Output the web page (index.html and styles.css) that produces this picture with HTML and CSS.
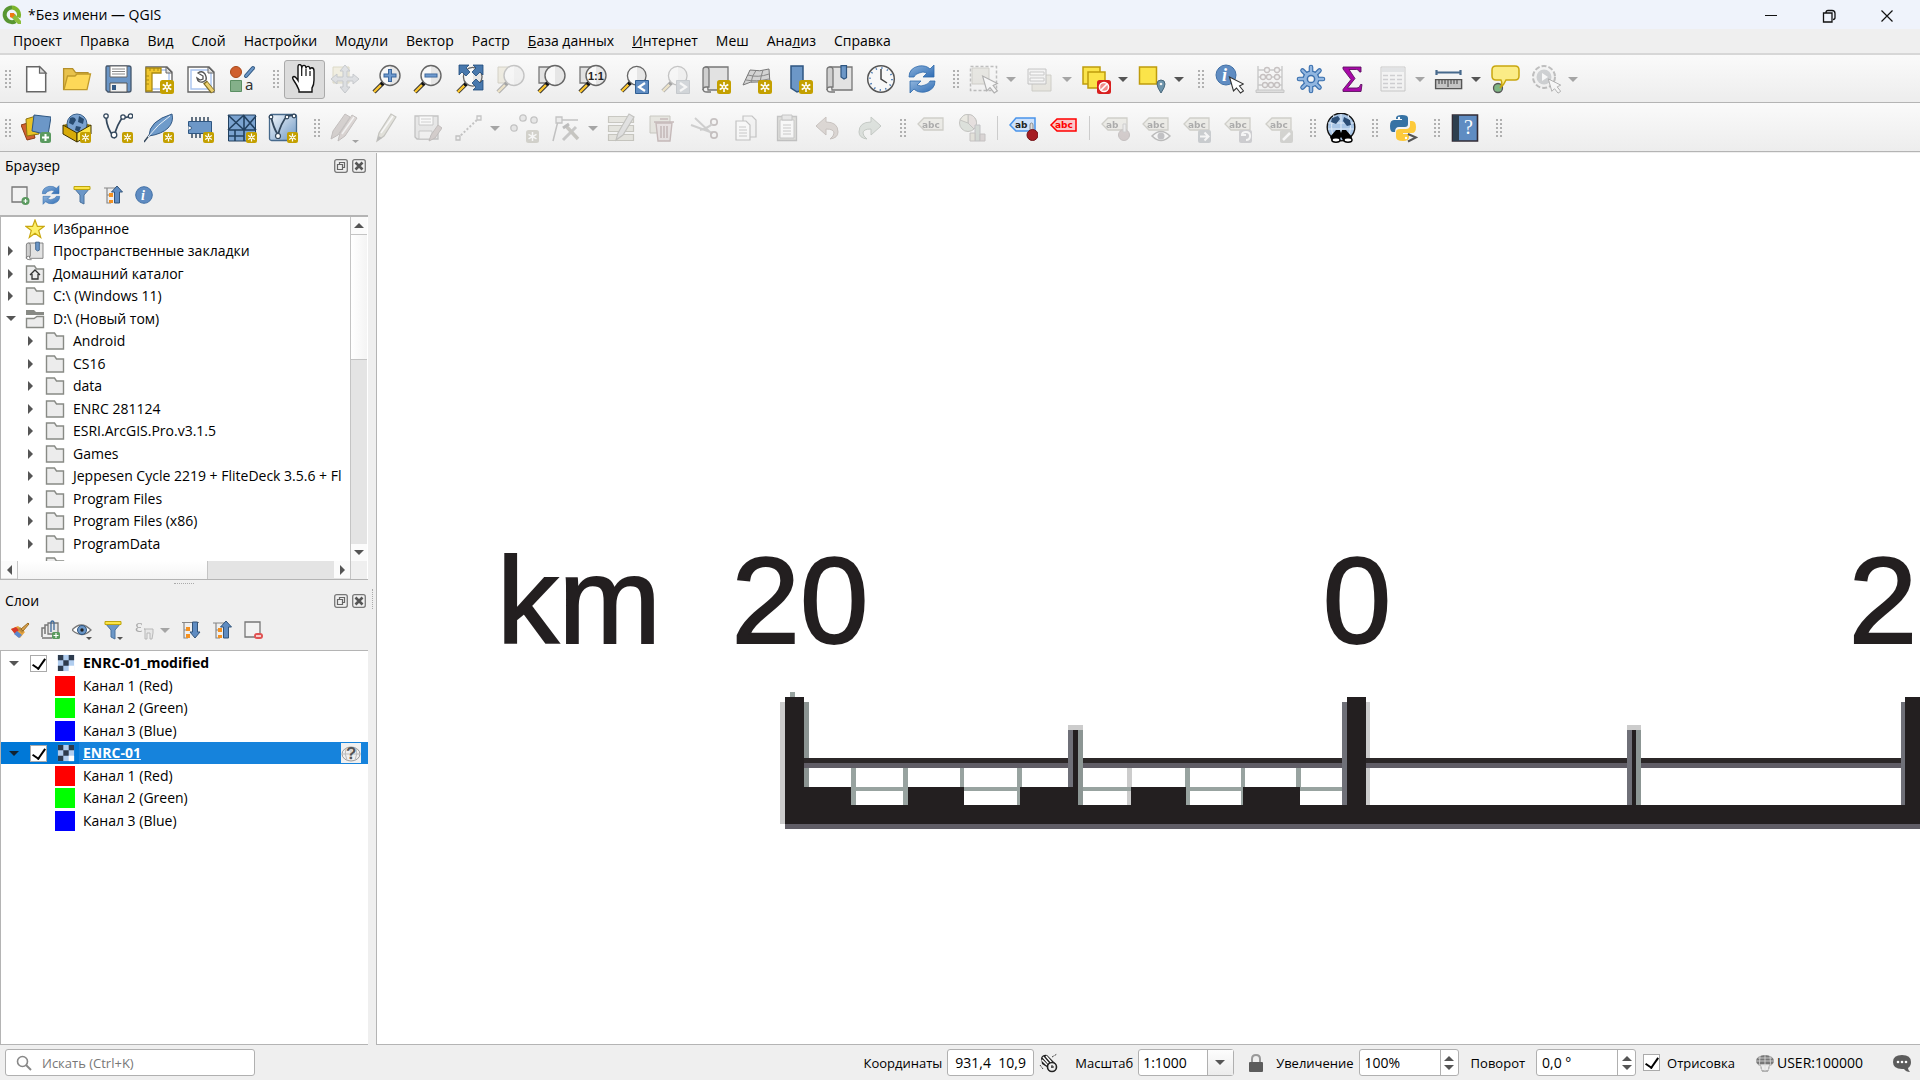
FILE: index.html
```html
<!DOCTYPE html>
<html lang="ru">
<head>
    <meta charset="UTF-8">
    <meta name="viewport" content="width=device-width, initial-scale=1.0">
    <title>*Без имени — QGIS</title>
    <link rel="stylesheet" href="styles.css">
</head>
<body>
    <svg class="sprite" aria-hidden="true">
        <defs>
            <linearGradient id="lens" x1="0" y1="0" x2="1" y2="0">
                <stop offset="0.5" stop-color="#f8f8f8"/>
                <stop offset="0.5" stop-color="#e6e6e6"/>
            </linearGradient>
            <linearGradient id="blue" x1="0" y1="0" x2="1" y2="1">
                <stop offset="0" stop-color="#8fb4dc"/>
                <stop offset="1" stop-color="#2f6db5"/>
            </linearGradient>
            <linearGradient id="pale" x1="0" y1="0" x2="1" y2="1">
                <stop offset="0" stop-color="#f4f8fc"/>
                <stop offset="1" stop-color="#6d97c4"/>
            </linearGradient>
        </defs>

        <!-- shared parts -->
        <symbol id="badge" viewBox="0 0 14 14">
            <rect width="14" height="14" rx="2.5" fill="#c4a000"/>
            <path d="M7 2v10M2.7 4.5l8.6 5M11.3 4.5l-8.6 5" stroke="#fff" stroke-width="1.6" fill="none"/>
            <circle cx="7" cy="7" r="1" fill="#c4a000"/>
        </symbol>
        <symbol id="loupe" viewBox="0 0 30 30">
            <path d="M12 19L3 28" stroke="#333" stroke-width="4.4"/>
            <path d="M10 21l-7 7" stroke="#fbc62f" stroke-width="2.4"/>
            <circle cx="11.500" cy="19.500" r="2" fill="#111"/>
            <circle cx="19" cy="11.500" r="10" fill="url(#lens)" stroke="#666" stroke-width="1.4"/>
        </symbol>
        <symbol id="cursor" viewBox="0 0 16 18">
            <path d="M1 1l4 14 3-3 4 5 3-2-4-5 4-2z" fill="#fff" stroke="#333" stroke-width="1.1"/>
        </symbol>
        <symbol id="tag" viewBox="0 0 30 30">
            <path d="M2 11l6-6h19v12H8z" fill="#dcd8c0" stroke="#8c8868" stroke-width="1.3"/>
        </symbol>
        <symbol id="sheet" viewBox="0 0 30 30">
            <path d="M2 3h21l5 5v20H2z" fill="#fff" stroke="#666" stroke-width="1.4"/>
            <path d="M5 6h17l3 3v16H5z" fill="none" stroke="#a9c4ef" stroke-width="1.4"/>
            <path d="M22 3v6h6z" fill="#ddd" stroke="#666"/>
        </symbol>
        <symbol id="scroll" viewBox="0 0 30 30">
            <path d="M5 3h22v23H7z" fill="#e2e2e2" stroke="#777" stroke-width="1.3"/>
            <path d="M2 6q0-3 3-3t3 3v17H5q-3 0-3 3z" fill="#cfcfcf" stroke="#777" stroke-width="1.3"/>
            <path d="M2 25q0 3 4 3h4" fill="none" stroke="#777" stroke-width="1.3"/>
        </symbol>

        <!-- project -->
        <symbol id="i-new" viewBox="0 0 30 30">
            <path d="M5.700 2.700h13l6 6v19h-19z" fill="#fff" stroke="#666" stroke-width="1.500"/>
            <path d="M18.500 2.700v6.500h6.500z" fill="#ddd" stroke="#666" stroke-width="1.200"/>
        </symbol>
        <symbol id="i-open" viewBox="0 0 30 30">
            <path d="M1.600 26V4.600h9l3 4H26V12" fill="#e8c24c" stroke="#b48f2a" stroke-width="1.300"/>
            <path d="M5.500 12H13l2-2h13.500L25 25.600H2z" fill="#fdd858" stroke="#c09a2a" stroke-width="1.300"/>
        </symbol>
        <symbol id="i-save" viewBox="0 0 30 30">
            <path d="M4 2h22q2 0 2 2v22q0 2-2 2H5l-2-2V4q0-2 1-2z" fill="#6a95c6" stroke="#44566b" stroke-width="1.300"/>
            <path d="M7 2h17v11H7z" fill="#fff" stroke="#666"/>
            <path d="M9 5h13M9 7.500h13M9 10h13" stroke="#888"/>
            <path d="M7 19h17v9H7z" fill="#f0f0f0" stroke="#555"/>
            <path d="M9 21h4v5H9z" fill="#345a85"/>
        </symbol>
        <symbol id="i-layout" viewBox="0 0 30 30">
            <use href="#sheet"/>
            <path d="M2 4h15v5H8v18H2z" fill="#f0c62e" stroke="#ab8a11" stroke-width="1.300"/>
            <path d="M6 4v3M10 4v3M14 4v3M2 12h3M2 16h3M2 20h3" stroke="#ab8a11"/>
            <use href="#badge" x="16" y="16" width="14" height="14"/>
        </symbol>
        <symbol id="i-manager" viewBox="0 0 30 30">
            <use href="#sheet"/>
            <path d="M12 9q4-3 7 1 2 4 1 6l-3 2q-5 1-6-4l3 2 3-1v-3z" fill="#fff" stroke="#555" stroke-width="1.300"/>
            <path d="M19 18l8 10" stroke="#7d6a22" stroke-width="5"/>
            <path d="M20 19l7 8.500" stroke="#ecd06f" stroke-width="3"/>
        </symbol>
        <symbol id="i-style" viewBox="0 0 30 30">
            <circle cx="9" cy="8" r="5.500" fill="#d0602f" stroke="#a84717"/>
            <path d="M26 4l-7 8" stroke="#2e5681" stroke-width="4" stroke-linecap="round"/>
            <path d="M26 4l-7 8" stroke="#6c97c7" stroke-width="2" stroke-linecap="round"/>
            <path d="M3.500 16.500h11v11h-11z" fill="#84b08a" stroke="#5b8f63"/>
        </symbol>

        <!-- map navigation -->
        <symbol id="i-hand" viewBox="0 0 30 30">
            <path d="M9 27q-2-5-5.500-10-2-3 .5-3.500 1.500 0 4 4V4q0-2.400 1.700-2.400T11.700 4v1.200q.3-2.800 2.300-2.800t2 3q.2-2 2-2t2 3q.3-1.600 1.800-1.600 2.200.2 2.200 3.200v9q0 5-2 8v4H9z" transform="translate(1 -1)" fill="#fff" stroke="#111" stroke-width="1.400"/>
            <path d="M12.700 4v8M17 5v7M21 7v5" stroke="#111" stroke-width="1.200"/>
        </symbol>
        <symbol id="i-pansel" viewBox="0 0 30 30">
            <path d="M3 3h16v16H3z" fill="#f1e295" stroke="#b5a33c"/>
            <path d="M15 1l5 6h-3v6h6v-3l6 5-6 5v-3h-6v6h3l-5 6-5-6h3v-6H7v3l-6-5 6-5v3h6V7h-3z" fill="#aebccb" stroke="#66778a"/>
        </symbol>
        <symbol id="i-zoomin" viewBox="0 0 30 30">
            <use href="#loupe"/>
            <path d="M19 5v13M12.500 11.500h13" stroke="#39659b" stroke-width="4"/>
            <path d="M19 6v11M13.500 11.500h11" stroke="#6f9bd0" stroke-width="2.200"/>
        </symbol>
        <symbol id="i-zoomout" viewBox="0 0 30 30">
            <use href="#loupe"/>
            <path d="M12.500 11.500h13" stroke="#39659b" stroke-width="4"/>
            <path d="M13.500 11.500h11" stroke="#6f9bd0" stroke-width="2.200"/>
        </symbol>
        <symbol id="i-zoomfull" viewBox="0 0 30 30">
            <use href="#loupe" x="1" y="2" width="28" height="28"/>
            <g fill="#4878ad" stroke="#1f4a78" stroke-width="0.800">
                <path d="M5 1h10l-3 3 4 4-4 4-4-4-3 3z"/>
                <path d="M29 1v10l-3-3-4 4-4-4 4-4-3-3z"/>
                <path d="M29 26H19l3-3-4-4 4-4 4 4 3-3z"/>
            </g>
        </symbol>
        <symbol id="i-zoomsel" viewBox="0 0 30 30">
            <path d="M3 3h14v16H3z" fill="#e8d79b" stroke="#9b8c52"/>
            <use href="#loupe"/>
        </symbol>
        <symbol id="i-zoomlayer" viewBox="0 0 30 30">
            <path d="M3 3h14v16H3z" fill="#e2e2e2" stroke="#777" stroke-width="1.300"/>
            <use href="#loupe"/>
        </symbol>
        <symbol id="i-zoomlast" viewBox="0 0 30 30">
            <use href="#loupe" x="0" y="1" width="28" height="28"/>
            <path d="M16.500 16.500h13v13h-13z" fill="#5f8cc2" stroke="#2f5e93"/>
            <path d="M26 19l-6 4 6 4" fill="none" stroke="#fff" stroke-width="2.200"/>
        </symbol>
        <symbol id="i-zoomnext" viewBox="0 0 30 30">
            <use href="#loupe" x="0" y="1" width="28" height="28"/>
            <path d="M16.500 16.500h13v13h-13z" fill="#8fa3ba" stroke="#6c8098"/>
            <path d="M20 19l6 4-6 4" fill="none" stroke="#fff" stroke-width="2.200"/>
        </symbol>
        <symbol id="i-newmap" viewBox="0 0 30 30">
            <use href="#scroll"/>
            <use href="#badge" x="16" y="16" width="14" height="14"/>
        </symbol>
        <symbol id="i-map3d" viewBox="0 0 30 30">
            <path d="M8 6q10 2 19-1l1 15q-6-4-12-2-8-1-15 3z" fill="#d3d3d3" stroke="#777"/>
            <path d="M6 11q10 3 21-1M4 16q10 2 23-1M14 6.500q-4 5-5 12M21 6q-2 6-3 12" stroke="#888" fill="none"/>
            <use href="#badge" x="16" y="16" width="14" height="14"/>
        </symbol>
        <symbol id="i-bookmark" viewBox="0 0 30 30">
            <path d="M7 2h12v24l-6 2-6-4z" fill="#6c97c7" stroke="#2e5681" stroke-width="1.500"/>
            <use href="#badge" x="15" y="16" width="14" height="14"/>
        </symbol>
        <symbol id="i-bookmarks" viewBox="0 0 30 30">
            <use href="#scroll"/>
            <path d="M16 1.700h5.500v12L19 15l-3-2z" fill="#6c97c7" stroke="#2e5681" stroke-width="1.200"/>
        </symbol>
        <symbol id="i-clock" viewBox="0 0 30 30">
            <circle cx="15" cy="15" r="13.300" fill="#f8f8f8" stroke="#555" stroke-width="1.500"/>
            <circle cx="15" cy="15" r="11" fill="none" stroke="#4f7fb8" stroke-width="1.800" stroke-dasharray="1.300 4.460"/>
            <path d="M15 5v10l6 4" fill="none" stroke="#444" stroke-width="1.500"/>
        </symbol>
        <symbol id="i-refresh" viewBox="0 0 30 30">
            <path d="M2 13q0-9 10-11 7-1 11 3l4-4v12H16l4-4q-4-2-8 0-4 1-5 4z" fill="url(#blue)" stroke="#2f69ab" stroke-width="0.800"/>
            <path d="M28 17q0 9-10 11-7 1-11-3l-4 4V17h11l-4 4q4 2 8 0 4-1 5-4z" fill="url(#blue)" stroke="#2f69ab" stroke-width="0.800"/>
        </symbol>

        <!-- selection -->
        <symbol id="i-select" viewBox="0 0 30 30">
            <path d="M1.500 2.500h26v24h-26z" fill="none" stroke="#555" stroke-width="1.500" stroke-dasharray="3 2"/>
            <path d="M3 4h17v16H3z" fill="#cfcab0" stroke="#8c8868"/>
            <use href="#cursor" x="12" y="11" width="18" height="19"/>
        </symbol>
        <symbol id="i-form" viewBox="0 0 30 30">
            <path d="M7 11h19v16H7z" fill="#d5cfa8" stroke="#8c8868"/>
            <path d="M3 5h18v15H3z" fill="#eee" stroke="#666"/>
            <path d="M5 8h14v3H5zM5 14h14v3H5z" fill="#fff" stroke="#777"/>
        </symbol>
        <symbol id="i-deselect" viewBox="0 0 30 30">
            <path d="M2 3h17v17H2z" fill="#fbe44a" stroke="#bf9c0c" stroke-width="1.500"/>
            <path d="M7 8h17v16H7z" fill="#fbe44a" stroke="#bf9c0c" stroke-width="1.500"/>
            <rect x="16" y="16" width="14" height="14" rx="2.500" fill="#d8201f"/>
            <circle cx="23" cy="23" r="4.600" fill="#f18d8b" stroke="#fff" stroke-width="1.500"/>
            <path d="M20 26l6-6" stroke="#fff" stroke-width="1.700"/>
        </symbol>
        <symbol id="i-selectloc" viewBox="0 0 30 30">
            <path d="M2.500 3h17v17h-17z" fill="#fbe44a" stroke="#bf9c0c" stroke-width="1.500"/>
            <path d="M24 29q-4-6-4-9 0-4 4-4t4 4q0 3-4 9z" fill="#6d94ab" stroke="#49687c"/>
            <circle cx="24" cy="20" r="1.300" fill="#f0f0f0"/>
        </symbol>

        <!-- attributes -->
        <symbol id="i-identify" viewBox="0 0 30 30">
            <circle cx="12" cy="11" r="10" fill="#5f8cc2" stroke="#4170a6"/>
            <use href="#cursor" x="14" y="12" width="17" height="18"/>
        </symbol>
        <symbol id="i-calc" viewBox="0 0 30 30">
            <path d="M3 2v24M27 2v24M3 6h24M3 13h24M3 21h24" stroke="#777" stroke-width="1.400"/>
            <path d="M1 26h28v2.500H1z" fill="#bbb" stroke="#777"/>
            <g fill="#eee" stroke="#7a5c5c" stroke-width="1.300">
                <circle cx="12" cy="6" r="2.500"/><circle cx="22" cy="6" r="2.500"/>
                <circle cx="8" cy="13" r="2.500"/><circle cx="14" cy="13" r="2.500"/><circle cx="22" cy="13" r="2.500"/>
                <circle cx="10" cy="21" r="2.500"/><circle cx="16" cy="21" r="2.500"/><circle cx="22" cy="21" r="2.500"/>
            </g>
        </symbol>
        <symbol id="i-gear" viewBox="0 0 30 30">
            <path d="M15 3v24M3 15h24M6.500 6.500l17 17M23.500 6.500l-17 17" stroke="#3b70ae" stroke-width="4.600" stroke-linecap="round"/>
            <circle cx="15" cy="15" r="8.500" fill="#3b70ae"/>
            <path d="M15 3v24M3 15h24M6.500 6.500l17 17M23.500 6.500l-17 17" stroke="#91b6e0" stroke-width="2.400" stroke-linecap="round"/>
            <circle cx="15" cy="15" r="7.300" fill="#91b6e0"/>
            <circle cx="15" cy="15" r="3.600" fill="#f4f4f4" stroke="#3b70ae" stroke-width="1.500"/>
        </symbol>
        <symbol id="i-sigma" viewBox="0 0 30 30">
            <path d="M6 3h18v5h-1.500q-.5-2.500-3-2.500H12l6 9-7.500 9.500H20q3 0 3.500-3.500H25l-1 7H6v-2l8-10L6 5z" fill="#a808a8" stroke="#5c1260" stroke-width="0.900"/>
        </symbol>
        <symbol id="i-table" viewBox="0 0 30 30">
            <path d="M3 3h24v24H3z" fill="#f2f2f2" stroke="#777"/>
            <path d="M4 4h22v4H4z" fill="#b8c2cc"/>
            <path d="M5 11.500h5M12 11.500h5M19 11.500h5M5 15.500h5M12 15.500h5M19 15.500h5M5 19.500h5M12 19.500h5M19 19.500h5M5 23.500h5M12 23.500h5M19 23.500h5" stroke="#889" stroke-width="1.500"/>
        </symbol>
        <symbol id="i-measure" viewBox="0 0 30 30">
            <path d="M2 8.500h25M2.500 6v5M26.500 6v5" stroke="#46698c" stroke-width="2.200"/>
            <path d="M1.600 15.600h26v9h-26z" fill="#c4c4c4" stroke="#555" stroke-width="1.400"/>
            <path d="M5 16v4M8 16v4M11 16v4M14 16v7M17 16v4M20 16v4M23 16v4" stroke="#555" stroke-width="1.200"/>
        </symbol>
        <symbol id="i-tip" viewBox="0 0 30 30">
            <circle cx="8" cy="24" r="4.500" fill="#7fb583" stroke="#555" stroke-width="1.300"/>
            <path d="M6 2h19q4 0 4 4v6q0 4-4 4H16q-2 5-6 8 3-4 1-8H6q-4 0-4-4V6q0-4 4-4z" fill="#fbec86" stroke="#c9a70f" stroke-width="1.500"/>
        </symbol>
        <symbol id="i-action" viewBox="0 0 30 30">
            <circle cx="13" cy="13" r="11" fill="#eee" stroke="#555" stroke-width="2" stroke-dasharray="5 2"/>
            <circle cx="13" cy="13" r="7.500" fill="#7f8c98"/>
            <path d="M11 9v8l6-4z" fill="#fff"/>
            <use href="#cursor" x="16" y="14" width="15" height="16"/>
        </symbol>

        <!-- data sources -->
        <symbol id="i-datasource" viewBox="0 0 30 30">
            <path d="M0 12l10-3 4 16-8 2z" fill="#d0602f" stroke="#8d3b14"/>
            <path d="M5 6l10-3 3 18-12 2z" fill="#e8c325" stroke="#8d7410"/>
            <path d="M13 2l17 2-3 18-16-4z" fill="#6c97c7" stroke="#2e5681"/>
            <rect x="19" y="19" width="11" height="11" rx="2.500" fill="#5a9a5f"/>
            <path d="M24.500 21v7M21 24.500h7" stroke="#fff" stroke-width="2"/>
        </symbol>
        <symbol id="i-geopackage" viewBox="0 0 30 30">
            <path d="M1 12l14-4 14 4-14 8z" fill="#8c6f00"/>
            <circle cx="15" cy="11" r="10" fill="#7ba3d0" stroke="#385f8a"/>
            <path d="M8 5q5-2 6 2l-3 5-4-2zM17 3l5 3-1 5-5-2zM14 13l5 1-2 5-4-2z" fill="#284b70"/>
            <path d="M1 12l14 8v9L1 21z" fill="#d8ab09" stroke="#3d3100"/>
            <path d="M29 12l-14 8v9l14-8z" fill="#fbe44a" stroke="#3d3100"/>
            <use href="#badge" x="18" y="19" width="11" height="11"/>
        </symbol>
        <symbol id="i-shapefile" viewBox="0 0 30 30">
            <path d="M3 4q1 12 8 20 3-13 9-20 4 1 7-1" fill="none" stroke="#33475c" stroke-width="1.800"/>
            <g fill="#fff" stroke="#33475c" stroke-width="1.300">
                <circle cx="3" cy="3" r="2.200"/><circle cx="11" cy="22" r="2.800"/>
                <circle cx="20" cy="4" r="2.200"/><circle cx="27.500" cy="3" r="2.200"/>
            </g>
            <use href="#badge" x="19" y="19" width="11" height="11"/>
        </symbol>
        <symbol id="i-feather" viewBox="0 0 30 30">
            <path d="M0 29q6-8 9-11" fill="none" stroke="#33475c" stroke-width="1.500"/>
            <path d="M5 23Q5 8 28 1q2 8-4 14-6 6-19 8z" fill="#6f9bca" stroke="#345a85"/>
            <path d="M4 24Q14 11 26 3" fill="none" stroke="#eaf1f9"/>
            <use href="#badge" x="19" y="19" width="11" height="11"/>
        </symbol>
        <symbol id="i-memory" viewBox="0 0 30 30">
            <path d="M6 4v21M10 4v21M14 4v21M18 4v21M22 4v21" stroke="#33475c" stroke-width="1.500"/>
            <path d="M2.500 8.500h23v12h-23z" fill="#6c97c7" stroke="#2e5681"/>
            <path d="M2.500 13q3 0 3 2t-3 2" fill="#fff" stroke="#2e5681"/>
            <use href="#badge" x="17" y="19" width="11" height="11"/>
        </symbol>
        <symbol id="i-meshlayer" viewBox="0 0 30 30">
            <path d="M1.500 2h27v26h-27z" fill="#7ba3d0" stroke="#22405f"/>
            <path d="M1 2l16 15M17 2L1 17M17 2v26M1 17h28M17 17L29 3M1 23h16M8 17v11M29 17L17 3" stroke="#22405f" stroke-width="1.600"/>
            <use href="#badge" x="19" y="19" width="11" height="11"/>
        </symbol>
        <symbol id="i-gpx" viewBox="0 0 30 30">
            <rect x="1.500" y="1.500" width="27" height="26" rx="2" fill="url(#pale)" stroke="#46698c" stroke-width="1.300"/>
            <path d="M3 3q2 11 7 19 3-12 9-19l7-1" fill="none" stroke="#33475c" stroke-width="1.800"/>
            <g fill="#fff" stroke="#33475c" stroke-width="1.200">
                <circle cx="3" cy="4" r="1.800"/><circle cx="10" cy="23" r="2.500"/><circle cx="19" cy="4" r="1.800"/><circle cx="26" cy="3" r="1.800"/>
            </g>
            <use href="#badge" x="19" y="19" width="11" height="11"/>
        </symbol>

        <!-- digitizing -->
        <symbol id="i-pencil" viewBox="0 0 30 30">
            <path d="M6 28l2-8L20 1l5 3-12 19z" fill="#c3bf9b" stroke="#6e6b50" stroke-width="1.200"/>
            <path d="M10 20L22 3" stroke="#fff" stroke-width="1.500"/>
            <path d="M6 28l1.500-5 3.500 2z" fill="#555"/>
        </symbol>
        <symbol id="i-pencils" viewBox="0 0 30 30">
            <path d="M1 26l2-8L15 1l5 3L8 22z" fill="#a58a83" stroke="#6b5650"/>
            <path d="M8 28l2-8L22 2l5 3-12 18z" fill="#b9958c" stroke="#6b5650"/>
            <path d="M12 21L24 4" stroke="#eee" stroke-width="1.500"/>
            <path d="M22 27h7l-3.500 3z" fill="#111"/>
        </symbol>
        <symbol id="i-saveedits" viewBox="0 0 30 30">
            <path d="M3 3h23v23H5l-2-2z" fill="#cfcfcf" stroke="#666" stroke-width="1.300"/>
            <path d="M7 3h14v9H7z" fill="#fff" stroke="#777"/>
            <path d="M9 6h10M9 9h10" stroke="#888"/>
            <path d="M7 18h13v8H7z" fill="#eee" stroke="#777"/>
            <path d="M17 28l2-6 7-10 4 3-7 10z" fill="#a8837c" stroke="#6b5650"/>
        </symbol>
        <symbol id="i-line" viewBox="0 0 30 30">
            <path d="M5 25L26 5" stroke="#666" stroke-width="2" stroke-dasharray="2 2"/>
            <path d="M3 23h4v4H3zM24 3h4v4h-4z" fill="#eee" stroke="#666" stroke-width="1.300"/>
        </symbol>
        <symbol id="i-points" viewBox="0 0 30 30">
            <g fill="#ccc" stroke="#666" stroke-width="1.300">
                <circle cx="13" cy="5" r="3.200"/><circle cx="24" cy="7" r="3.200"/><circle cx="4" cy="15" r="3.200"/>
            </g>
            <rect x="16" y="17" width="13" height="13" rx="2.500" fill="#9a9570"/>
            <path d="M22.500 19v9M18.500 21.300l8 4.500M26.500 21.300l-8 4.500" stroke="#fff" stroke-width="1.500"/>
        </symbol>
        <symbol id="i-vertex" viewBox="0 0 30 30">
            <path d="M2 28L7 8M10 7h17" stroke="#666" stroke-width="1.500"/>
            <path d="M5 4h6v6H5z" fill="#ddd" stroke="#666" stroke-width="1.300"/>
            <path d="M12 27l13-13" stroke="#777" stroke-width="3"/>
            <path d="M15 13l12 13" stroke="#77715a" stroke-width="3.500"/>
            <path d="M12 15l6-4" stroke="#555" stroke-width="3"/>
        </symbol>
        <symbol id="i-multiedit" viewBox="0 0 30 30">
            <path d="M1.500 3.500h25v6h-25zM1.500 12.500h25v6h-25zM1.500 21.500h25v6h-25z" fill="#cdc9a8" stroke="#77734f" stroke-width="1.200"/>
            <path d="M9 27l2-7L22 1l5 3-11 18z" fill="#bbb" stroke="#665" stroke-width="1.200"/>
        </symbol>
        <symbol id="i-delete" viewBox="0 0 30 30">
            <path d="M2 3h20v17H2z" fill="#cdc9a8" stroke="#77734f"/>
            <path d="M8 10h16l-2 18H10z" fill="#dcbcbc" stroke="#8c4646" stroke-width="1.400"/>
            <path d="M6 9h20M12 6h8M13 13v12M16 13v12M19 13v12" stroke="#8c4646" stroke-width="1.600"/>
        </symbol>
        <symbol id="i-cut" viewBox="0 0 30 30">
            <path d="M1 12l22 8M5 5l17 16" stroke="#888" stroke-width="2"/>
            <circle cx="24" cy="9" r="3.200" fill="none" stroke="#7a5c5c" stroke-width="1.700"/>
            <circle cx="24" cy="22" r="3.200" fill="none" stroke="#7a5c5c" stroke-width="1.700"/>
            <path d="M10 17q8-2 12-6" fill="none" stroke="#888" stroke-width="2"/>
        </symbol>
        <symbol id="i-copy" viewBox="0 0 30 30">
            <path d="M12 3h9l4 4v17H12z" fill="#eee" stroke="#666" stroke-width="1.200"/>
            <path d="M5 8h10l4 4v15H5z" fill="#fff" stroke="#666" stroke-width="1.200"/>
            <path d="M8 14h7M8 17h8M8 20h8M8 23h8" stroke="#777"/>
        </symbol>
        <symbol id="i-paste" viewBox="0 0 30 30">
            <path d="M5.500 3.500h19v24h-19z" fill="#b5b5a5" stroke="#666" stroke-width="1.300"/>
            <path d="M8 7h14v18H8z" fill="#fff" stroke="#777"/>
            <path d="M10 2h10v5H10z" fill="#ccc" stroke="#666"/>
            <path d="M11 12h8M11 15h8M11 18h8M11 21h8" stroke="#777"/>
        </symbol>
        <symbol id="i-undo" viewBox="0 0 30 30">
            <path d="M3 13L13 4v5q12 0 12 10 0 6-8 7 4-3 4-6 0-4-8-4v6z" fill="#bb9c8a" stroke="#80604e"/>
        </symbol>
        <symbol id="i-redo" viewBox="0 0 30 30">
            <path d="M27 13L17 4v5Q5 9 5 19q0 6 8 7-4-3-4-6 0-4 8-4v6z" fill="#a9c0ab" stroke="#5f7c62"/>
        </symbol>

        <!-- labels -->
        <symbol id="i-diagram" viewBox="0 0 30 30">
            <circle cx="11" cy="10" r="8.500" fill="#a9bf9f" stroke="#665"/>
            <path d="M11 10V1.500A8.500 8.500 0 0 1 17 16z" fill="#d5b2ad" stroke="#665"/>
            <path d="M11 10L3 7Q6 1 11 1.500z" fill="#d8d2a8" stroke="#665"/>
            <path d="M18 12h5v16h-5z" fill="#8fae96" stroke="#667"/>
            <path d="M13 20h5v8h-5z" fill="#cbc49a" stroke="#766"/>
            <path d="M23 21h5v7h-5z" fill="#b99" stroke="#766"/>
        </symbol>
        <symbol id="i-pin" viewBox="0 0 30 30">
            <path d="M2 12l6-7h19v13H8z" fill="#cfe2fb" stroke="#4a94ea" stroke-width="1.500"/>
            <path d="M22 12q0-2 1.500-2t1.500 2v8h-3z" fill="#ddd" stroke="#777" stroke-width="0.800"/>
            <circle cx="24.500" cy="22" r="5.500" fill="#a61c22" stroke="#731318"/>
        </symbol>
        <symbol id="i-unplaced" viewBox="0 0 30 30">
            <path d="M2 12l6-6h19v12H8z" fill="#f9c9c9" stroke="#f00" stroke-width="1.500"/>
        </symbol>
        <symbol id="i-labelpin" viewBox="0 0 30 30">
            <use href="#tag"/>
            <circle cx="24" cy="22" r="5.500" fill="#a88080" stroke="#7a6060"/>
            <path d="M23 11h3v8h-3z" fill="#ddd" stroke="#888"/>
        </symbol>
        <symbol id="i-labeleye" viewBox="0 0 30 30">
            <use href="#tag"/>
            <path d="M11 23q9-9 18 0-9 9-18 0z" fill="#fff" stroke="#555" stroke-width="1.500"/>
            <circle cx="20" cy="23" r="3.500" fill="#667"/>
        </symbol>
        <symbol id="i-labelmove" viewBox="0 0 30 30">
            <use href="#tag"/>
            <rect x="16" y="17" width="13" height="13" rx="2" fill="#789"/>
            <path d="M18 23.500h7M22.500 19.500l4 4-4 4" fill="none" stroke="#fff" stroke-width="2"/>
        </symbol>
        <symbol id="i-labelrotate" viewBox="0 0 30 30">
            <use href="#tag"/>
            <rect x="16" y="17" width="13" height="13" rx="2" fill="#889"/>
            <path d="M23 27q4 0 4-4t-4-4-4 3h4" fill="none" stroke="#fff" stroke-width="2"/>
        </symbol>
        <symbol id="i-labeledit" viewBox="0 0 30 30">
            <use href="#tag"/>
            <rect x="16" y="17" width="13" height="13" rx="2" fill="#998"/>
            <path d="M19 27l7-7" stroke="#fff" stroke-width="2.500"/>
        </symbol>

        <!-- plugins -->
        <symbol id="i-metasearch" viewBox="0 0 30 30">
            <circle cx="15" cy="14" r="13.800" fill="#a9c6e6" stroke="#111" stroke-width="1.400"/>
            <path d="M2 10h26M2 16h26M15 1v20M8 2q-5 12 0 22M22 2q5 12 0 22" fill="none" stroke="#dfeaf6"/>
            <path d="M6 5l6-2 2 3-4 5-5-2zM18 4l6 3 1 5-4 1-4-5z" fill="#2b4d75"/>
            <path d="M10 17h4l1 3 1-3h4l6 7-2 5h-6l-3-5-3 5H6l-2-5z" fill="#000"/>
            <ellipse cx="10" cy="27" rx="4" ry="2.200" fill="#fff" stroke="#000" stroke-width="1.500"/>
            <ellipse cx="22" cy="27" rx="4" ry="2.200" fill="#fff" stroke="#000" stroke-width="1.500"/>
        </symbol>
        <symbol id="i-python" viewBox="0 0 30 30">
            <path d="M14 2q6 0 6 3v6q0 3-3 3h-6q-4 0-4 5H5q-3 0-3-6t4-6h8V6H8V5q0-3 6-3z" fill="#3672a4"/>
            <path d="M15 28q-7 0-7-4v-5q0-3 4-3h6q4 0 4-4V8h2q4 0 4 6t-4 6h-9v1h6v3q0 4-6 4z" fill="#fdca3b"/>
            <circle cx="11" cy="5" r="1.200" fill="#fff"/>
            <circle cx="18" cy="25" r="1.200" fill="#fff"/>
            <path d="M20 21l8 3.500-8 4" fill="none" stroke="#555" stroke-width="2"/>
        </symbol>
        <symbol id="i-help" viewBox="0 0 30 30">
            <path d="M2.500 2h25v26h-25z" fill="#5f8cc2" stroke="#332c36" stroke-width="1.600"/>
            <path d="M3 2h6v26H3z" fill="#2d3e4e"/>
        </symbol>

        <!-- dock panels -->
        <symbol id="i-addlayer" viewBox="0 0 20 20">
            <path d="M2 2h15v15H2z" fill="#f2f2f2" stroke="#777" stroke-width="1.300"/>
            <circle cx="15.500" cy="16" r="4" fill="#5a9a5f"/>
            <path d="M15.500 14v4M13.500 16h4" stroke="#fff" stroke-width="1.200"/>
        </symbol>
        <symbol id="i-filter" viewBox="0 0 20 20">
            <path d="M2 3h16l-6 7v9l-4-2v-7z" fill="#6c97c7" stroke="#4a729e"/>
            <path d="M2 1.500h16v3H2z" fill="#fbe44a" stroke="#bfa60c"/>
        </symbol>
        <symbol id="i-collapse" viewBox="0 0 20 20">
            <path d="M1 3h15M4 3v15h4M4 10h4" fill="none" stroke="#888" stroke-width="1.200"/>
            <path d="M6 8h4v4H6zM6 15h4v3H6z" fill="#f49120"/>
            <path d="M14 1l5.500 6H16.500v11h-5V7H8.500z" fill="#5f8cc2" stroke="#33557b"/>
        </symbol>
        <symbol id="i-expand" viewBox="0 0 20 20">
            <path d="M1 2.500h17M3 3v15h4M3 10h4" fill="none" stroke="#888" stroke-width="1.200"/>
            <path d="M5 7h4v4H5zM5 14h4v4H5z" fill="#f49120"/>
            <path d="M14 18l5-6h-2.500V2h-5v10H9z" fill="#5f8cc2" stroke="#33557b"/>
        </symbol>
        <symbol id="i-info" viewBox="0 0 20 20">
            <circle cx="10" cy="10" r="8.300" fill="#5f8cc2" stroke="#4170a6"/>
        </symbol>
        <symbol id="i-brush" viewBox="0 0 20 20">
            <path d="M1 9l7-3 7 6-5 6q-3-1-4-3z" fill="#e8a33c"/>
            <path d="M1 9l5-2 3 3-4 4z" fill="#d8392b"/>
            <path d="M4 14l3-3 5 4-3 3z" fill="#5b87cf"/>
            <path d="M9 8l4 4" stroke="#b98a3c" stroke-width="3"/>
            <path d="M11 9l7-6 1 1-6 7z" fill="#d9a24c" stroke="#9a6b22"/>
        </symbol>
        <symbol id="i-addgroup" viewBox="0 0 20 20">
            <path d="M1 17V8h3M4 14V5h3M1 18h10" fill="none" stroke="#777" stroke-width="1.500"/>
            <path d="M7 3h10v11H7z" fill="#e6e6e6" stroke="#777" stroke-width="1.300"/>
            <path d="M10 12V3q0-2 1.500-2T13 3v7" fill="none" stroke="#3f6a9b" stroke-width="1.300"/>
            <rect x="11" y="12" width="8" height="7" rx="1.500" fill="#5a9a5f"/>
            <path d="M15 13v5M12.500 15.500h5" stroke="#fff" stroke-width="1.200"/>
        </symbol>
        <symbol id="i-eye" viewBox="0 0 20 20">
            <path d="M0 10q9-10 19 0-9 9-19 0z" fill="#fff" stroke="#777" stroke-width="1.300"/>
            <circle cx="10" cy="10" r="4.500" fill="#6c97c7" stroke="#2e5681"/>
            <circle cx="10" cy="10" r="1.700" fill="#222"/>
            <path d="M14 17h6l-3 3z" fill="#555"/>
        </symbol>
        <symbol id="i-filterdrop" viewBox="0 0 20 20">
            <use href="#i-filter"/>
            <path d="M14 17h6l-3 3z" fill="#555"/>
        </symbol>
        <symbol id="i-expression" viewBox="0 0 20 20">
            <path d="M10 9h9v4l-1 6h-2v-6h-3v6h-2V9z" fill="#ddd" stroke="#666"/>
        </symbol>
        <symbol id="i-removelayer" viewBox="0 0 20 20">
            <path d="M2 2h15v15H2z" fill="#f2f2f2" stroke="#777" stroke-width="1.300"/>
            <rect x="11" y="13" width="9" height="6" rx="3" fill="#e05252"/>
            <path d="M13 16h5" stroke="#fff" stroke-width="1.400"/>
        </symbol>
        <symbol id="i-star" viewBox="0 0 20 20">
            <path d="M10 1l2.400 6.400H19l-5.300 4 2 7L10 14.200 4.300 18.400l2-7-5.300-4h6.600z" fill="#fdf06b" stroke="#c9a70f" stroke-width="1.200"/>
        </symbol>
        <symbol id="i-folder" viewBox="0 0 20 20">
            <path d="M1.500 2h8l2 3h7v13h-17z" fill="#ececec" stroke="#888a85" stroke-width="1.400"/>
        </symbol>
        <symbol id="i-home" viewBox="0 0 20 20">
            <use href="#i-folder"/>
            <path d="M5 11l5-5 5 5M7 10v5h6v-5" fill="none" stroke="#333" stroke-width="1.300"/>
        </symbol>
        <symbol id="i-drive" viewBox="0 0 20 20">
            <path d="M1 1h8l2 2h8v3H1z" fill="#888a85"/>
            <path d="M1.500 9.500H9l3-2h6.500v11h-17z" fill="#ececec" stroke="#888a85" stroke-width="1.400"/>
        </symbol>
        <symbol id="i-raster" viewBox="0 0 20 20">
            <path d="M1 1h18v18H1z" fill="#b0cdef"/>
            <path d="M1 1h6v6H1zM13 1h6v6h-6zM7 7h6v6H7zM1 13h6v6H1z" fill="#2d3b4d"/>
            <path d="M13 13h6v6h-6z" fill="#fff"/>
        </symbol>
        <symbol id="i-float" viewBox="0 0 14 14">
            <rect x="0.700" y="0.700" width="12.600" height="12.600" rx="2" fill="none" stroke="#777" stroke-width="1.300"/>
            <path d="M5.500 5V3.500h5v5H9M3.500 5.500h5v5h-5z" fill="none" stroke="#666" stroke-width="1.200"/>
        </symbol>
        <symbol id="i-closedock" viewBox="0 0 14 14">
            <rect x="0.700" y="0.700" width="12.600" height="12.600" rx="2" fill="none" stroke="#777" stroke-width="1.300"/>
            <path d="M3.500 3.500l7 7M10.500 3.500l-7 7" stroke="#555" stroke-width="2.600"/>
        </symbol>
        <symbol id="i-crs" viewBox="0 0 20 20">
            <ellipse cx="10" cy="11" rx="9" ry="7" fill="none" stroke="#999"/>
            <path d="M1 11h18M10 4v14M5 5q-2 6 1 12M15 5q2 6-1 12" fill="none" stroke="#bbb"/>
        </symbol>
    </svg>

    <header class="titlebar">
        <svg class="app-icon" viewBox="0 0 20 20">
            <path d="M10 2.500a7.300 7.300 0 1 0 3.500 13.700" fill="none" stroke="#589632" stroke-width="4"/>
            <path d="M10 2.500a7.300 7.300 0 0 1 6.500 10" fill="none" stroke="#7db52c" stroke-width="4"/>
            <path d="M10 9l3 0 6 7v3h-3l-6-6z" fill="#8cbe3c"/>
            <path d="M8 8h4l1 2-3 3-2-1z" fill="#ee7913"/>
        </svg>
        <h1>*Без имени — QGIS</h1>
        <div class="window-buttons">
            <button aria-label="Свернуть"><svg viewBox="0 0 14 14"><path d="M1 6.500h12" stroke="#111"/></svg></button>
            <button aria-label="Восстановить"><svg viewBox="0 0 14 14"><path d="M1.500 4h8.500v9H1.500z M4 3.500q0-2 2-2h4q3 0 3 3v4q0 2-2 2" fill="none" stroke="#111" stroke-width="1.300"/></svg></button>
            <button aria-label="Закрыть"><svg viewBox="0 0 14 14"><path d="M1.500 1.500l11 11M12.500 1.500l-11 11" stroke="#111" stroke-width="1.200"/></svg></button>
        </div>
    </header>

    <nav class="menubar">
        <button>Проект</button>
        <button>Правка</button>
        <button>Вид</button>
        <button>Слой</button>
        <button>Настройки</button>
        <button>Модули</button>
        <button>Вектор</button>
        <button>Растр</button>
        <button><u>Б</u>аза данных</button>
        <button><u>И</u>нтернет</button>
        <button>Меш</button>
        <button>Ана<u>л</u>из</button>
        <button>Справка</button>
    </nav>

    <div class="toolbar" role="toolbar" aria-label="Навигация">
        <div class="group">
            <span class="grip"></span>
            <div class="cluster">
                <button aria-label="Создать"><svg><use href="#i-new"/></svg></button>
                <button aria-label="Открыть"><svg><use href="#i-open"/></svg></button>
                <button aria-label="Сохранить"><svg><use href="#i-save"/></svg></button>
                <button aria-label="Создать макет"><svg><use href="#i-layout"/></svg></button>
            </div>
            <div class="cluster">
                <button aria-label="Менеджер макетов"><svg><use href="#i-manager"/></svg></button>
                <button aria-label="Управление стилями"><svg><use href="#i-style"/><text x="18" y="26" class="style-text">a</text></svg></button>
            </div>
        </div>
        <div class="group">
            <span class="grip"></span>
            <div class="cluster">
                <button class="pressed" aria-label="Прокрутка карты" aria-pressed="true"><svg><use href="#i-hand"/></svg></button>
                <button disabled aria-label="Центрировать на выделении"><svg><use href="#i-pansel"/></svg></button>
                <button aria-label="Увеличить"><svg><use href="#i-zoomin"/></svg></button>
                <button aria-label="Уменьшить"><svg><use href="#i-zoomout"/></svg></button>
            </div>
            <div class="cluster">
                <button aria-label="Полный охват"><svg><use href="#i-zoomfull"/></svg></button>
                <button disabled aria-label="Увеличить до выделенного"><svg><use href="#i-zoomsel"/></svg></button>
                <button aria-label="Увеличить до слоя"><svg><use href="#i-zoomlayer"/></svg></button>
                <button aria-label="Исходный размер"><svg><use href="#i-zoomlayer"/><text x="11" y="16" class="native-text">1:1</text></svg></button>
            </div>
            <div class="cluster">
                <button aria-label="Предыдущий охват"><svg><use href="#i-zoomlast"/></svg></button>
                <button disabled aria-label="Следующий охват"><svg><use href="#i-zoomnext"/></svg></button>
                <button aria-label="Новый вид карты"><svg><use href="#i-newmap"/></svg></button>
                <button aria-label="Новый 3D вид"><svg><use href="#i-map3d"/></svg></button>
            </div>
            <div class="cluster">
                <button aria-label="Новая закладка"><svg><use href="#i-bookmark"/></svg></button>
                <button aria-label="Показать закладки"><svg><use href="#i-bookmarks"/></svg></button>
                <button aria-label="Управление временем"><svg><use href="#i-clock"/></svg></button>
                <button aria-label="Обновить"><svg><use href="#i-refresh"/></svg></button>
            </div>
        </div>
        <div class="group">
            <span class="grip"></span>
            <button class="drop" disabled aria-label="Выделить объекты"><svg><use href="#i-select"/></svg></button>
            <button class="drop" disabled aria-label="Выделить по значению"><svg><use href="#i-form"/></svg></button>
            <button class="drop" aria-label="Снять выделение"><svg><use href="#i-deselect"/></svg></button>
            <button class="drop" aria-label="Выделить по расположению"><svg><use href="#i-selectloc"/></svg></button>
        </div>
        <div class="group">
            <span class="grip"></span>
            <button aria-label="Определить объекты"><svg><use href="#i-identify"/><text x="8" y="17" class="info-text">i</text></svg></button>
            <button disabled aria-label="Калькулятор полей"><svg><use href="#i-calc"/></svg></button>
            <button aria-label="Инструменты анализа"><svg><use href="#i-gear"/></svg></button>
            <button aria-label="Статистическая сводка"><svg><use href="#i-sigma"/></svg></button>
            <button class="drop" disabled aria-label="Таблица атрибутов"><svg><use href="#i-table"/></svg></button>
            <button class="drop" aria-label="Измерить линию"><svg><use href="#i-measure"/></svg></button>
            <button aria-label="Подсказки"><svg><use href="#i-tip"/></svg></button>
            <button class="drop" disabled aria-label="Действие объекта"><svg><use href="#i-action"/></svg></button>
        </div>
    </div>

    <div class="toolbar" role="toolbar" aria-label="Данные">
        <div class="group">
            <span class="grip"></span>
            <div class="cluster">
                <button aria-label="Источники данных"><svg><use href="#i-datasource"/></svg></button>
                <button aria-label="Слой GeoPackage"><svg><use href="#i-geopackage"/></svg></button>
                <button aria-label="Shape-файл"><svg><use href="#i-shapefile"/></svg></button>
                <button aria-label="Слой SpatiaLite"><svg><use href="#i-feather"/></svg></button>
            </div>
            <div class="cluster">
                <button aria-label="Временный слой"><svg><use href="#i-memory"/></svg></button>
                <button aria-label="Меш-слой"><svg><use href="#i-meshlayer"/></svg></button>
                <button aria-label="Слой GPX"><svg><use href="#i-gpx"/></svg></button>
            </div>
        </div>
        <div class="group">
            <span class="grip"></span>
            <div class="cluster">
                <button disabled aria-label="Текущие правки"><svg><use href="#i-pencils"/></svg></button>
                <button disabled aria-label="Режим правки"><svg><use href="#i-pencil"/></svg></button>
                <button disabled aria-label="Сохранить правки"><svg><use href="#i-saveedits"/></svg></button>
                <button class="drop" disabled aria-label="Оцифровка"><svg><use href="#i-line"/></svg></button>
            </div>
            <div class="cluster">
                <button disabled aria-label="Добавить точку"><svg><use href="#i-points"/></svg></button>
                <button class="drop" disabled aria-label="Редактор вершин"><svg><use href="#i-vertex"/></svg></button>
                <button disabled aria-label="Изменить атрибуты"><svg><use href="#i-multiedit"/></svg></button>
                <button disabled aria-label="Удалить"><svg><use href="#i-delete"/></svg></button>
            </div>
            <div class="cluster">
                <button disabled aria-label="Вырезать"><svg><use href="#i-cut"/></svg></button>
                <button disabled aria-label="Копировать"><svg><use href="#i-copy"/></svg></button>
                <button disabled aria-label="Вставить"><svg><use href="#i-paste"/></svg></button>
                <button disabled aria-label="Отменить"><svg><use href="#i-undo"/></svg></button>
                <button disabled aria-label="Повторить"><svg><use href="#i-redo"/></svg></button>
            </div>
        </div>
        <div class="group">
            <span class="grip"></span>
            <button disabled aria-label="Подписи слоя"><svg><use href="#tag"/><text x="6" y="15" class="tag-text">abc</text></svg></button>
            <button disabled aria-label="Диаграммы слоя"><svg><use href="#i-diagram"/></svg></button>
            <span class="divider"></span>
            <button aria-label="Закреплённые подписи"><svg><use href="#i-pin"/><text x="7" y="15" class="tag-text">ab</text></svg></button>
            <button aria-label="Неразмещённые подписи"><svg><use href="#i-unplaced"/><text x="6" y="15" class="tag-text red">abc</text></svg></button>
            <span class="divider"></span>
            <button disabled aria-label="Закрепить подписи"><svg><use href="#i-labelpin"/><text x="6" y="15" class="tag-text">ab</text></svg></button>
            <button disabled aria-label="Показать подписи"><svg><use href="#i-labeleye"/><text x="6" y="15" class="tag-text">abc</text></svg></button>
            <button disabled aria-label="Переместить подпись"><svg><use href="#i-labelmove"/><text x="6" y="15" class="tag-text">abc</text></svg></button>
            <button disabled aria-label="Повернуть подпись"><svg><use href="#i-labelrotate"/><text x="6" y="15" class="tag-text">abc</text></svg></button>
            <button disabled aria-label="Изменить подпись"><svg><use href="#i-labeledit"/><text x="6" y="15" class="tag-text">abc</text></svg></button>
        </div>
        <div class="group">
            <span class="grip"></span>
            <button aria-label="MetaSearch"><svg><use href="#i-metasearch"/></svg></button>
        </div>
        <div class="group">
            <span class="grip"></span>
            <button aria-label="Консоль Python"><svg><use href="#i-python"/></svg></button>
        </div>
        <div class="group">
            <span class="grip"></span>
            <button aria-label="Справка"><svg><use href="#i-help"/><text x="14" y="21" class="help-text">?</text></svg></button>
        </div>
        <div class="group">
            <span class="grip"></span>
        </div>
    </div>

    <main class="workspace">
        <aside class="docks">
            <section class="dock browser">
                <div class="dock-title">
                    <h2>Браузер</h2>
                    <button aria-label="Открепить"><svg><use href="#i-float"/></svg></button>
                    <button aria-label="Закрыть"><svg><use href="#i-closedock"/></svg></button>
                </div>
                <div class="dock-tools">
                    <button aria-label="Добавить слои"><svg><use href="#i-addlayer"/></svg></button>
                    <button aria-label="Обновить"><svg><use href="#i-refresh"/></svg></button>
                    <button aria-label="Фильтр"><svg><use href="#i-filter"/></svg></button>
                    <button aria-label="Свернуть все"><svg><use href="#i-collapse"/></svg></button>
                    <button aria-label="Свойства"><svg><use href="#i-info"/><text x="7" y="15" class="info-small">i</text></svg></button>
                </div>
                <div class="tree-frame">
                    <ul class="tree">
                        <li><span class="twist none"></span><svg><use href="#i-star"/></svg>Избранное</li>
                        <li><span class="twist"></span><svg><use href="#i-bookmarks"/></svg>Пространственные закладки</li>
                        <li><span class="twist"></span><svg><use href="#i-home"/></svg>Домашний каталог</li>
                        <li><span class="twist"></span><svg><use href="#i-folder"/></svg>C:\ (Windows 11)</li>
                        <li><span class="twist open"></span><svg><use href="#i-drive"/></svg>D:\ (Новый том)</li>
                        <li class="child"><span class="twist"></span><svg><use href="#i-folder"/></svg>Android</li>
                        <li class="child"><span class="twist"></span><svg><use href="#i-folder"/></svg>CS16</li>
                        <li class="child"><span class="twist"></span><svg><use href="#i-folder"/></svg>data</li>
                        <li class="child"><span class="twist"></span><svg><use href="#i-folder"/></svg>ENRC 281124</li>
                        <li class="child"><span class="twist"></span><svg><use href="#i-folder"/></svg>ESRI.ArcGIS.Pro.v3.1.5</li>
                        <li class="child"><span class="twist"></span><svg><use href="#i-folder"/></svg>Games</li>
                        <li class="child"><span class="twist"></span><svg><use href="#i-folder"/></svg>Jeppesen Cycle 2219 + FliteDeck 3.5.6 + Fl</li>
                        <li class="child"><span class="twist"></span><svg><use href="#i-folder"/></svg>Program Files</li>
                        <li class="child"><span class="twist"></span><svg><use href="#i-folder"/></svg>Program Files (x86)</li>
                        <li class="child"><span class="twist"></span><svg><use href="#i-folder"/></svg>ProgramData</li>
                        <li class="child"><span class="twist"></span><svg><use href="#i-folder"/></svg></li>
                    </ul>
                    <div class="scroll-v">
                        <button class="up" aria-label="Вверх"></button>
                        <span class="thumb"></span>
                        <span class="groove"></span>
                        <button class="down" aria-label="Вниз"></button>
                    </div>
                    <div class="scroll-h">
                        <button class="left" aria-label="Влево"></button>
                        <span class="thumb"></span>
                        <span class="groove"></span>
                        <button class="right" aria-label="Вправо"></button>
                    </div>
                    <span class="corner"></span>
                </div>
            </section>
            <div class="splitter"><span></span></div>
            <section class="dock layers">
                <div class="dock-title">
                    <h2>Слои</h2>
                    <button aria-label="Открепить"><svg><use href="#i-float"/></svg></button>
                    <button aria-label="Закрыть"><svg><use href="#i-closedock"/></svg></button>
                </div>
                <div class="dock-tools">
                    <button aria-label="Стиль"><svg><use href="#i-brush"/></svg></button>
                    <button aria-label="Добавить группу"><svg><use href="#i-addgroup"/></svg></button>
                    <button aria-label="Темы карты"><svg><use href="#i-eye"/></svg></button>
                    <button aria-label="Фильтр легенды"><svg><use href="#i-filterdrop"/></svg></button>
                    <button class="small-drop" disabled aria-label="Фильтр по выражению"><svg><use href="#i-expression"/><text x="1" y="12" class="epsilon">ε</text></svg></button>
                    <button aria-label="Развернуть все"><svg><use href="#i-expand"/></svg></button>
                    <button aria-label="Свернуть все"><svg><use href="#i-collapse"/></svg></button>
                    <button aria-label="Удалить слой"><svg><use href="#i-removelayer"/></svg></button>
                </div>
                <ul class="tree layer-tree">
                    <li class="layer"><span class="twist open"></span><input type="checkbox" id="layer1" checked><svg><use href="#i-raster"/></svg><label for="layer1">ENRC-01_modified</label></li>
                    <li class="band"><span class="swatch red"></span>Канал 1 (Red)</li>
                    <li class="band"><span class="swatch green"></span>Канал 2 (Green)</li>
                    <li class="band"><span class="swatch blue"></span>Канал 3 (Blue)</li>
                    <li class="layer selected"><span class="twist open"></span><input type="checkbox" id="layer2" checked><svg><use href="#i-raster"/></svg><label for="layer2">ENRC-01</label><button class="no-crs" aria-label="Нет системы координат"><svg><use href="#i-crs"/><text x="5" y="16" class="crs-text">?</text></svg></button></li>
                    <li class="band"><span class="swatch red"></span>Канал 1 (Red)</li>
                    <li class="band"><span class="swatch green"></span>Канал 2 (Green)</li>
                    <li class="band"><span class="swatch blue"></span>Канал 3 (Blue)</li>
                </ul>
            </section>
        </aside>
        <div class="dock-edge"><span></span></div>

        <section class="map">
            <svg class="map-canvas" role="img" aria-label="Масштабная линейка">
                <g class="map-text" text-anchor="middle">
                    <text x="202" y="490">km</text>
                    <text x="423" y="490">20</text>
                    <text x="980" y="490">0</text>
                    <text x="1506" y="490">2</text>
                </g>
                <g shape-rendering="crispEdges">
                    <!-- soft edges -->
                    <path d="M403 549h5v122h-5zM989 549h4v103h-4z" fill="#ccc"/>
                    <path d="M413 539h5v5h-5z" fill="#98a3a0"/>
                    <path d="M427 549h5v85h-5z" fill="#8b9492"/>
                    <path d="M408 671h1135v5H408z" fill="#605d66"/>
                    <!-- small cells -->
                    <path d="M474 615h5v37h-5zM526 615h5v37h-5zM583 615h4v20h-4zM640 615h5v37h-5zM808 615h5v37h-5zM864 615h4v37h-4zM919 615h5v20h-5z" fill="#98a3a0"/>
                    <path d="M750 615h5v37h-5z" fill="#ccc"/>
                    <path d="M427 634h539v4H427z" fill="#98a3a0"/>
                    <!-- rails -->
                    <path d="M427 605h1116v5H427z" fill="#2b2728"/>
                    <path d="M427 610h1116v5H427z" fill="#605d66"/>
                    <path d="M408 652h1135v19H408z" fill="#231f20"/>
                    <path d="M427 634h47v18h-47zM531 634h56v18h-56zM643 634h56v18h-56zM754 634h55v18h-55zM866 634h57v18h-57z" fill="#231f20"/>
                    <!-- ticks -->
                    <path d="M691 572h15v5h-15zM1250 572h14v5h-14z" fill="#ccc"/>
                    <path d="M691 577h5v57h-5zM965 549h5v103h-5zM1250 577h5v75h-5zM1524 549h4v103h-4z" fill="#6f7078"/>
                    <path d="M701 577h5v75h-5zM1259 577h5v75h-5z" fill="#8c9694"/>
                    <path d="M696 577h5v75h-5zM1255 577h4v75h-4z" fill="#231f20"/>
                    <path d="M408 544h19v127h-19zM970 544h19v127h-19zM1528 544h15v127h-15z" fill="#231f20"/>
                </g>
            </svg>
        </section>
    </main>

    <footer class="statusbar">
        <div class="search">
            <svg viewBox="0 0 16 16"><circle cx="6.500" cy="6.500" r="5" fill="none" stroke="#888" stroke-width="1.600"/><path d="M10 10l5 5" stroke="#888" stroke-width="2"/></svg>
            <input type="text" aria-label="Искать" placeholder="Искать (Ctrl+K)">
        </div>
        <div class="field position">
            <label for="coords">Координаты</label>
            <input type="text" id="coords" class="coords" value="931,4  10,9">
            <button class="icon-button" aria-label="Охват"><svg viewBox="0 0 20 20">
                <path d="M2 5q2-4 6-3l8 8-5 6-8-5z" fill="#222"/>
                <path d="M4 4l6 7M7 3l6 7M3 7l5 5" stroke="#fff" stroke-width="1.500"/>
                <circle cx="13" cy="14" r="4.500" fill="#eee" stroke="#222" stroke-width="1.600"/>
                <path d="M12 14h3M13 12v3" stroke="#222"/>
                <path d="M13 4l5-3M1 12l3 4" stroke="#444" stroke-dasharray="2 1"/>
            </svg></button>
        </div>
        <div class="field scale">
            <label for="scale">Масштаб</label>
            <div class="combo"><select id="scale"><option>1:1000</option></select></div>
            <button class="icon-button" aria-label="Заблокировать масштаб"><svg viewBox="0 0 20 20">
                <path d="M6 10V6q0-4 4-4t4 4v4" fill="none" stroke="#999" stroke-width="2"/>
                <rect x="3" y="9" width="14" height="10" rx="1" fill="#5c5c5c"/>
            </svg></button>
        </div>
        <div class="field">
            <label for="zoom">Увеличение</label>
            <div class="spin"><input type="text" id="zoom" value="100%"><span><button class="up" aria-label="Больше"></button><button class="down" aria-label="Меньше"></button></span></div>
        </div>
        <div class="field rotation">
            <label for="rotation">Поворот</label>
            <div class="spin"><input type="text" id="rotation" value="0,0 °"><span><button class="up" aria-label="Больше"></button><button class="down" aria-label="Меньше"></button></span></div>
        </div>
        <div class="field render">
            <input type="checkbox" id="render" checked>
            <label for="render">Отрисовка</label>
        </div>
        <button class="crs"><svg viewBox="0 0 20 20">
            <ellipse cx="10" cy="8" rx="9" ry="6" fill="#777"/>
            <path d="M5 11h10l-2 7H7z" fill="#eee" stroke="#777"/>
            <path d="M1 8h18M10 2v16M5 3q-2 8 2 15M15 3q2 8-2 15M3 5h14M3 12h14" fill="none" stroke="#ddd" stroke-width="0.800"/>
        </svg>USER:100000</button>
        <button class="messages" aria-label="Сообщения"><svg viewBox="0 0 20 20">
            <path d="M10 2q9 0 9 7 0 4-3 6 0 2 2 4-4 0-6-3H10q-9 0-9-7t9-7z" fill="#5c5c5c"/>
            <circle cx="6" cy="9" r="1.300" fill="#fff"/><circle cx="10" cy="9" r="1.300" fill="#fff"/><circle cx="14" cy="9" r="1.300" fill="#fff"/>
        </svg></button>
    </footer>
</body>
</html>
```
FILE: styles.css
```css
* {
    box-sizing: border-box;
}

body {
    margin: 0;
    height: 100vh;
    display: flex;
    flex-direction: column;
    overflow: hidden;
    background: #efefef;
    color: #000;
    font-family: "Open Sans", "Noto Sans", sans-serif;
    font-size: 14px;
    line-height: 20px;
}

button,
input,
select {
    font: inherit;
    color: inherit;
}

button {
    margin: 0;
    padding: 0;
    border: none;
    background: none;
}

h1,
h2 {
    margin: 0;
    font-size: 14px;
    font-weight: normal;
}

.sprite {
    position: absolute;
    width: 0;
    height: 0;
}

/* title bar */
.titlebar {
    display: flex;
    align-items: center;
    height: 29px;
    padding: 0 4px 0 2px;
    gap: 6px;
    background: #eff3fb;
}

.app-icon {
    width: 20px;
    height: 20px;
}

.window-buttons {
    display: flex;
    margin-left: auto;
}

.window-buttons button {
    width: 58px;
    height: 28px;
}

.window-buttons svg {
    width: 14px;
    height: 14px;
    vertical-align: middle;
}

/* menu */
.menubar {
    display: flex;
    height: 26px;
    padding-left: 4px;
    border-bottom: 2px solid #d7d7d7;
}

.menubar button {
    padding: 0 9px;
}

/* toolbars */
.toolbar {
    display: flex;
    gap: 5px;
    height: 48px;
    padding-top: 1px;
    background: linear-gradient(#fafafa, #ededed);
    border-bottom: 1px solid #b4b4b4;
}

.toolbar + .toolbar {
    height: 49px;
    padding-top: 2px;
}

.group {
    display: flex;
    align-items: center;
}

.cluster {
    display: flex;
}

.cluster + .cluster {
    margin-left: 1px;
}

.grip {
    width: 16px;
    height: 20px;
    padding: 0 4px;
    background: radial-gradient(circle, #b0b0b0 1px, transparent 1px) 0 0 / 4px 4px;
    background-origin: content-box;
    background-clip: content-box;
}

.toolbar button {
    display: flex;
    align-items: center;
    width: 41px;
    height: 39px;
    padding: 0 4px;
    border: 1px solid transparent;
    border-radius: 3px;
}

.toolbar button svg {
    width: 30px;
    height: 30px;
    flex: none;
}

.toolbar button.pressed {
    background: #dcdcdc;
    border-color: #aaa;
}

.toolbar button:disabled svg {
    opacity: 0.34;
    filter: grayscale(0.5);
}

.toolbar button.drop {
    width: 56px;
    gap: 7px;
}

.drop::after,
.small-drop::after {
    content: "";
    border: 5px solid transparent;
    border-top-color: #555;
    border-bottom: none;
}

.drop:disabled::after,
.small-drop:disabled::after {
    border-top-color: #a5a5a5;
}

.divider {
    width: 1px;
    height: 24px;
    margin: 0 5px 0 4px;
    background: #ccc;
}

.tag-text {
    font: bold 9px "DejaVu Sans", sans-serif;
    fill: #222;
}

.tag-text.red {
    fill: #f00;
}

.style-text {
    font: 15px "Noto Sans", sans-serif;
    fill: #333;
}

.native-text {
    font: bold 11px "Liberation Sans", sans-serif;
    fill: #222;
}

.info-text {
    font: italic bold 18px "Liberation Serif", serif;
    fill: #fff;
}

.info-small {
    font: italic bold 14px "Liberation Serif", serif;
    fill: #fff;
}

.help-text {
    font: 20px "Liberation Serif", serif;
    fill: #fff;
}

.epsilon {
    font: 18px "Liberation Serif", serif;
    fill: #444;
}

.crs-text {
    font: bold 17px "Liberation Sans", sans-serif;
    fill: #555;
}

/* workspace */
.workspace {
    flex: 1;
    display: flex;
    min-height: 0;
}

.docks {
    width: 368px;
    display: flex;
    flex-direction: column;
}

.dock {
    display: flex;
    flex-direction: column;
}

.dock-title {
    display: flex;
    align-items: center;
    gap: 4px;
    height: 28px;
    padding: 0 2px 0 5px;
}

.dock-title h2 {
    flex: 1;
}

.dock-title button,
.dock-title svg {
    display: block;
    width: 14px;
    height: 14px;
}

.dock-tools {
    display: flex;
    align-items: center;
    gap: 11px;
    height: 35px;
    padding: 0 10px 5px;
}

.dock-tools button {
    display: flex;
    align-items: center;
    gap: 6px;
}

.dock-tools svg {
    width: 20px;
    height: 20px;
}

.dock-tools button:disabled svg {
    opacity: 0.4;
}

.tree-frame {
    display: grid;
    grid-template-columns: 1fr 17px;
    grid-template-rows: 344px 18px;
    padding-right: 1px;
    border: 1px solid #b4b4b4;
    border-top-width: 2px;
    border-right: none;
    background: #fff;
}

.tree {
    margin: 0;
    padding: 0;
    list-style: none;
    overflow: hidden;
    background: #fff;
    white-space: nowrap;
}

.tree li {
    display: flex;
    align-items: center;
    height: 23px;
    padding-left: 3px;
}

.tree li:nth-child(even) {
    height: 22px;
}

.tree li.child {
    padding-left: 23px;
}

.tree svg {
    flex: none;
    width: 20px;
    height: 20px;
    margin-right: 8px;
}

.twist {
    flex: none;
    width: 21px;
    display: flex;
}

.twist::before {
    content: "";
    margin-left: 4px;
    border: 5px solid transparent;
    border-left-color: #555;
    border-right: none;
}

.twist.open::before {
    margin-left: 2px;
    border: 5px solid transparent;
    border-top-color: #555;
    border-bottom: none;
}

.twist.none::before {
    content: none;
}

.scroll-v,
.scroll-h {
    display: flex;
    background: #e4e4e4;
}

.scroll-v {
    flex-direction: column;
    border-left: 1px solid #c4c4c4;
}

.scroll-v button,
.scroll-h button {
    display: flex;
    align-items: center;
    justify-content: center;
    flex: none;
    width: 16px;
    height: 17px;
    background: #fbfbfb;
}

.scroll-v .thumb {
    height: 126px;
    background: linear-gradient(to right, #fff, #f4f4f4);
    border: 1px solid #c4c4c4;
    border-width: 1px 0;
}

.scroll-h .thumb {
    width: 191px;
    background: linear-gradient(#fff, #f4f4f4);
    border: 1px solid #c4c4c4;
    border-width: 0 1px;
}

.groove {
    flex: 1;
}

.corner {
    border-left: 1px solid #c4c4c4;
    background: #efefef;
}

.up::before,
.down::before,
.left::before,
.right::before {
    content: "";
    display: block;
    border: 5px solid transparent;
}

.up::before {
    border-top: none;
    border-bottom-color: #555;
}

.down::before {
    border-bottom: none;
    border-top-color: #555;
}

.left::before {
    border-left: none;
    border-right-color: #555;
}

.right::before {
    border-right: none;
    border-left-color: #555;
}

.splitter {
    display: flex;
    align-items: center;
    justify-content: center;
    height: 7px;
}

.splitter span {
    width: 20px;
    border-top: 1px dotted #aaa;
}

.layers {
    flex: 1;
}

.layer-tree {
    flex: 1;
    padding-top: 1px;
    border: 1px solid #b4b4b4;
    border-right: none;
}

.layer-tree li:nth-child(odd) {
    height: 22px;
}

.layer-tree li:nth-child(even) {
    height: 23px;
}

.tree li.layer {
    padding-left: 6px;
}

.layer .twist {
    width: 23px;
}

.layer svg {
    width: 18px;
    height: 18px;
}

.layer label {
    flex: 1;
    font-weight: bold;
}

input[type="checkbox"] {
    appearance: none;
    flex: none;
    width: 17px;
    height: 17px;
    margin: 0;
    border: 1px solid #aaa;
    background: #fff;
    display: flex;
    align-items: center;
    justify-content: center;
}

input[type="checkbox"]:checked::before {
    content: "";
    width: 6px;
    height: 11px;
    margin-bottom: 2px;
    border: solid #000;
    border-width: 0 2px 2px 0;
    transform: rotate(35deg);
}

.layer input[type="checkbox"] {
    margin-right: 10px;
}

.selected {
    background: linear-gradient(to right, #0078d7 78px, #1683dc 78px);
    color: #fff;
}

.selected label {
    text-decoration: underline;
}

.selected .twist.open::before {
    border-top-color: #123;
}

.no-crs {
    width: 20px;
    height: 20px;
    margin-right: 7px;
    background: #f0f0f0;
}

.tree .no-crs svg {
    display: block;
    width: 20px;
    height: 20px;
    margin: 0;
}

.tree li.band {
    padding-left: 54px;
}

.swatch {
    width: 20px;
    height: 20px;
    margin-right: 8px;
}

.swatch.red {
    background: #f00;
}

.swatch.green {
    background: #0f0;
}

.swatch.blue {
    background: #00f;
}

.dock-edge {
    display: flex;
    align-items: center;
    justify-content: center;
    width: 8px;
}

.dock-edge span {
    height: 20px;
    border-left: 1px dotted #aaa;
}

.map {
    flex: 1;
    min-width: 0;
    margin-top: 1px;
    border: 1px solid #b4b4b4;
    border-width: 0 0 1px 1px;
    background: #fff;
}

.map-canvas {
    display: block;
    width: 100%;
    height: 100%;
}

.map-text {
    font: 123px "Liberation Sans", sans-serif;
    fill: #231f20;
    stroke: #231f20;
    stroke-width: 2px;
}

/* status bar */
.statusbar {
    display: flex;
    align-items: center;
    height: 35px;
    padding: 0 8px 0 5px;
}

.search {
    display: flex;
    align-items: center;
    gap: 10px;
    width: 250px;
    height: 27px;
    margin-right: auto;
    padding: 0 10px;
    border: 1px solid #b0b0b0;
    border-radius: 3px;
    background: #fff;
}

.search svg {
    width: 16px;
    height: 16px;
}

.search input {
    flex: 1;
    min-width: 0;
    padding: 0;
    border: none;
    background: none;
    outline: none;
    font-size: 13px;
}

.search input::placeholder {
    color: #777;
}

.field {
    display: flex;
    align-items: center;
    gap: 5px;
    margin-right: 12px;
}

.field label {
    font-size: 13px;
}

.coords,
.combo select,
.spin {
    height: 27px;
    border: 1px solid #b0b0b0;
    border-radius: 3px;
    background: #fff;
}

.coords {
    width: 87px;
    padding: 0 7px;
    white-space: pre;
}

.icon-button svg,
.crs svg,
.messages svg {
    display: block;
    width: 20px;
    height: 20px;
}

.combo {
    position: relative;
}

.combo select {
    appearance: none;
    display: block;
    width: 96px;
    padding: 0 4px;
}

.combo::before {
    content: "";
    position: absolute;
    top: 1px;
    bottom: 1px;
    right: 1px;
    width: 25px;
    border-left: 1px solid #b0b0b0;
    background: linear-gradient(#fdfdfd, #ececec);
    pointer-events: none;
}

.combo::after {
    content: "";
    position: absolute;
    top: 11px;
    right: 9px;
    border: 5px solid transparent;
    border-top-color: #555;
    border-bottom: none;
    pointer-events: none;
}

.position {
    margin-right: 16px;
}

.scale {
    margin-right: 10px;
}

.scale .icon-button {
    margin-left: 7px;
}

.rotation {
    gap: 11px;
    margin-right: 7px;
}

.render {
    gap: 7px;
    margin-right: 20px;
}

.spin {
    display: flex;
    width: 100px;
}

.spin input {
    flex: 1;
    min-width: 0;
    padding: 0 5px;
    border: none;
    background: none;
    outline: none;
}

.spin span {
    display: flex;
    flex-direction: column;
    justify-content: center;
    gap: 4px;
    width: 18px;
    border-left: 1px solid #b0b0b0;
}

.spin button {
    display: flex;
    justify-content: center;
}

.crs {
    display: flex;
    align-items: center;
    gap: 2px;
    margin-right: 29px;
}
```
